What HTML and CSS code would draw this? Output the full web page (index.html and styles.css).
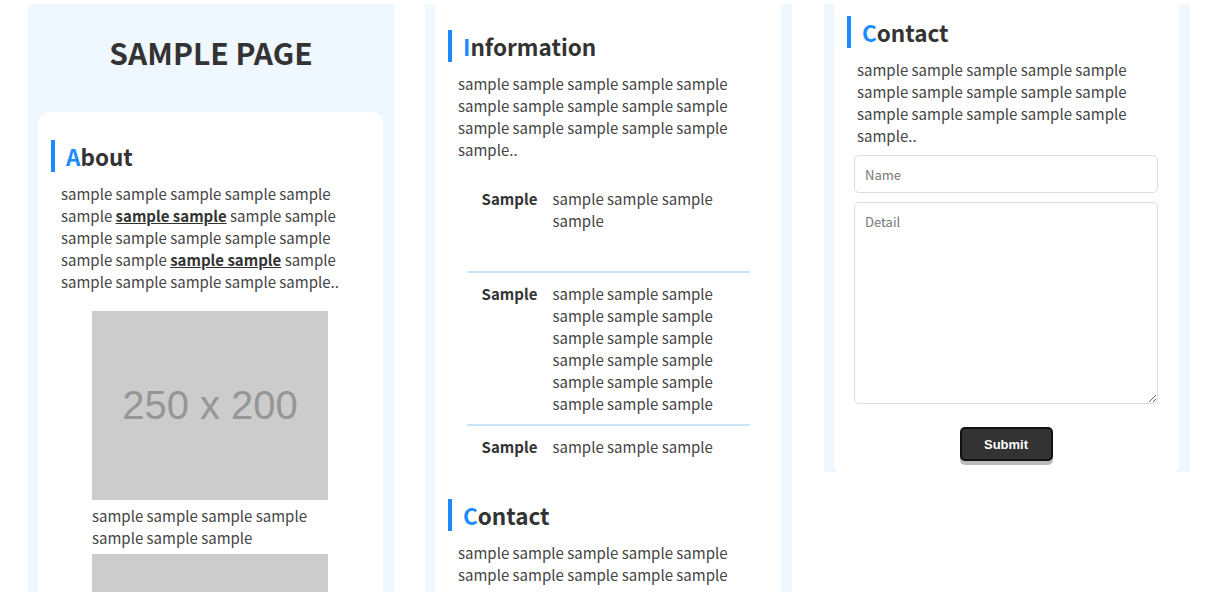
FILE: index.html
```html
<!DOCTYPE html>
<html lang="ja">
<head>
    <meta charset="UTF-8">
    <meta name="viewport" content="width=device-width, initial-scale=1.0">
    <title>SAMPLE PAGE</title>
    <link rel="stylesheet" href="styles.css">
</head>
<body>

    <div class="screens">

        <!-- トップ -->
        <div class="screen">
            <header class="page-header">
                <h1>SAMPLE PAGE</h1>
            </header>
            <main class="card card-top">
                <section class="section">
                    <h2 class="section-title"><span>A</span>bout</h2>
                    <p class="section-text">
                        sample sample sample sample sample sample <a href="#">sample sample</a> sample sample
                        sample sample sample sample sample sample sample <a href="#">sample sample</a> sample
                        sample sample sample sample sample..
                    </p>
                    <div class="gallery">
                        <div class="placeholder">250 x 200</div>
                        <p class="caption">sample sample sample sample sample sample sample</p>
                        <div class="placeholder"></div>
                    </div>
                </section>
            </main>
        </div>

        <!-- 中段 -->
        <div class="screen screen-mid">
            <main class="card">
                <section class="section section-info">
                    <h2 class="section-title"><span>I</span>nformation</h2>
                    <p class="section-text">
                        sample sample sample sample sample sample sample sample sample sample
                        sample sample sample sample sample sample..
                    </p>
                    <dl class="info-list">
                        <div class="info-row">
                            <dt>Sample</dt>
                            <dd>sample sample sample sample</dd>
                        </div>
                        <div class="info-row">
                            <dt>Sample</dt>
                            <dd>sample sample sample sample sample sample sample sample sample sample sample sample sample sample sample sample sample sample</dd>
                        </div>
                        <div class="info-row">
                            <dt>Sample</dt>
                            <dd>sample sample sample</dd>
                        </div>
                    </dl>
                </section>
                <section class="section section-contact">
                    <h2 class="section-title"><span>C</span>ontact</h2>
                    <p class="section-text">
                        sample sample sample sample sample sample sample sample sample sample
                    </p>
                </section>
            </main>
        </div>

        <!-- 下段 -->
        <div class="screen screen-end">
            <main class="card card-bottom">
                <section class="section section-form">
                    <h2 class="section-title"><span>C</span>ontact</h2>
                    <p class="section-text">
                        sample sample sample sample sample sample sample sample sample sample
                        sample sample sample sample sample sample..
                    </p>
                    <form class="contact-form" onsubmit="return false;">
                        <input type="text" placeholder="Name">
                        <textarea placeholder="Detail"></textarea>
                        <button type="submit">Submit</button>
                    </form>
                </section>
            </main>
        </div>

    </div>

</body>
</html>
```

FILE: styles.css
```css
body {
    margin: 0;
    font-family: 'Noto Sans CJK JP', 'Noto Sans', sans-serif;
    background-color: #fff;
    color: #444;
}
.screens {
    display: flex;
    align-items: flex-start;
    gap: 31px;
    padding: 4px 0 0 28px;
}
.screen {
    width: 366px;
    height: 588px;
    overflow: hidden;
    background-color: #eff7ff;
}
.screen-mid {
    width: 367px;
}
.screen-end {
    height: 468px;
    margin-left: 1px;
}
.page-header {
    padding: 26px 0 38px;
    text-align: center;
}
h1 {
    margin: 0;
    font-size: 30px;
    line-height: 44px;
    color: #333;
}
.card {
    margin: 0 11px 0 10px;
    background-color: #fff;
    min-height: 100%;
}
.card-top {
    border-radius: 12px 12px 0 0;
}
.card-bottom {
    min-height: 0;
    height: 472px;
    border-radius: 0 0 12px 12px;
}
.section {
    padding: 28px 0 0;
}
.section-info {
    padding-top: 26px;
}
.section-contact {
    padding-top: 32px;
}
.section-form {
    padding-top: 12px;
}
.section-title {
    margin: 0 0 0 13px;
    padding-left: 11px;
    border-left: 4px solid #1a8cff;
    font-size: 22.5px;
    line-height: 32px;
    color: #333;
}
.section-title span {
    color: #1a8cff;
}
.section-text {
    margin: 11px 23px 0 23px;
    font-size: 15px;
    line-height: 22px;
}
.section-text a {
    color: #333;
    font-weight: bold;
}
.gallery {
    display: flex;
    flex-direction: column;
    gap: 5px;
    width: 236px;
    margin: 18px auto 0 54px;
}
.placeholder {
    height: 189px;
    display: flex;
    align-items: center;
    justify-content: center;
    background-color: #ccc;
    color: #969696;
    font-family: 'Liberation Sans', Arial, sans-serif;
    font-size: 40px;
}
.caption {
    margin: 0;
    font-size: 15px;
    line-height: 22px;
}
.info-list {
    width: 283px;
    margin: 17px auto 0;
}
.info-row {
    display: grid;
    grid-template-columns: 86px 1fr;
    padding: 10px 0 9px;
    border-bottom: 2px solid #c9e3f9;
    font-size: 15px;
    line-height: 22px;
}
.info-row:first-child {
    padding-bottom: 39px;
}
.info-row:last-child {
    border-bottom: none;
}
.info-row dt {
    text-align: center;
    font-weight: bold;
    color: #333;
}
.info-row dd {
    margin: 0;
}
.contact-form {
    display: flex;
    flex-direction: column;
    align-items: center;
    gap: 9px;
    margin: 8px 21px 0 20px;
}
.contact-form input, .contact-form textarea {
    box-sizing: border-box;
    width: 100%;
    border: 1px solid #ddd;
    border-radius: 5px;
    padding: 0 10px;
    font-family: 'Noto Sans CJK JP', sans-serif;
    font-size: 13px;
    color: #444;
}
.contact-form input {
    height: 38px;
}
.contact-form textarea {
    height: 202px;
    padding-top: 9px;
    resize: vertical;
}
.contact-form ::placeholder {
    color: #777;
}
.contact-form button {
    margin-top: 14px;
    width: 93px;
    height: 34px;
    border: 2px solid #111;
    border-radius: 5px;
    background-color: #333;
    box-shadow: 0 4px 0 #bbb;
    color: #fff;
    font-family: 'Liberation Sans', Arial, sans-serif;
    font-size: 13px;
    font-weight: bold;
    cursor: pointer;
}
```
